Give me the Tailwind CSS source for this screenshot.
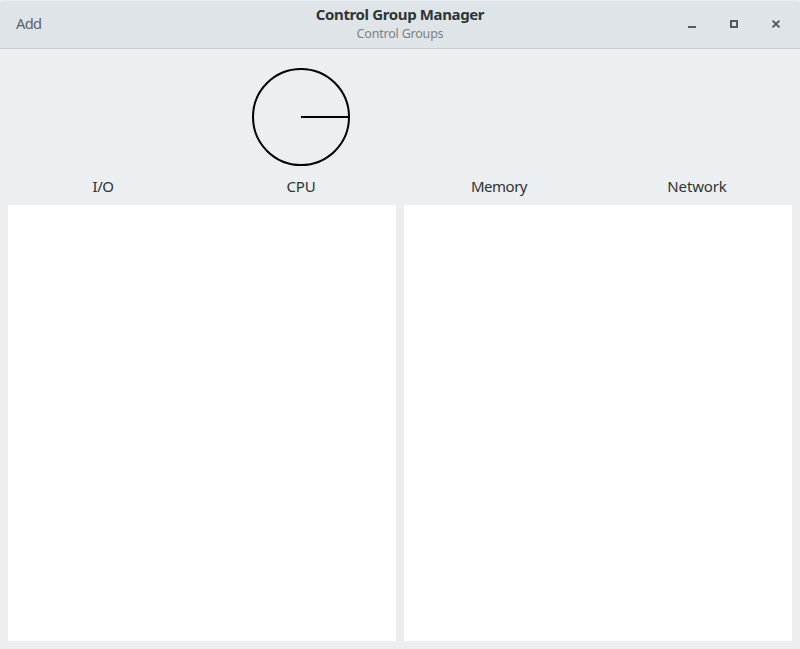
<!DOCTYPE html>
<html lang="en"><head><meta charset="utf-8"><title>Control Group Manager</title>
<script src="https://cdn.jsdelivr.net/npm/@tailwindcss/browser@4"></script></head>
<body class="w-[800px] h-[649px] overflow-hidden bg-[#ebeff2] flex flex-col font-['Noto_Sans',sans-serif] text-[#2e3436]">
<header class="h-[49px] shrink-0 grid grid-cols-3 bg-[#dfe4e8] border-b border-b-[#c5cacd] border-t border-t-[#e9edf0] rounded-t-[3px]">
<button class="justify-self-start self-center pl-4 pb-[3px] text-[14.67px] tracking-[-0.7px] leading-5 text-[#5c6165]">Add</button>
<div class="text-center pt-[3px]">
<h1 class="text-[15px] tracking-[-0.37px] leading-5 font-bold whitespace-nowrap">Control Group Manager</h1>
<p class="text-[12.5px] tracking-[-0.2px] leading-5 text-[#7c8184]">Control Groups</p>
</div>
<div class="flex justify-end items-center gap-[26px] pr-4 pb-0.5">
<svg class="size-4" viewBox="0 0 16 16"><path d="M4 10h8v2H4z" fill="#555a5d"/></svg>
<svg class="size-4" viewBox="0 0 16 16"><path d="M5 5h6v6H5z" fill="none" stroke="#555a5d" stroke-width="2"/></svg>
<svg class="size-4" viewBox="0 0 16 16"><path d="M4.600 4.600l6.800 6.800M11.400 4.600l-6.800 6.800" stroke="#555a5d" stroke-width="2"/></svg>
</div>
</header>
<main class="flex-1 flex flex-col px-2 pb-2">
<section class="h-[156px] grid grid-cols-4 gap-x-2 text-center text-[15px] tracking-[-0.15px] leading-5 items-end pb-[9px]">
<div class="tracking-[-0.5px]">I/O</div>
<div class="flex flex-col items-center"><svg class="w-[100px] h-[100px] mb-[9px]" viewBox="0 0 100 100" fill="none" stroke="#000" stroke-width="2"><circle cx="50" cy="50" r="48"/><path d="M50 50h48"/></svg>CPU</div>
<div class="tracking-[-0.5px]">Memory</div><div>Network</div>
</section>
<section class="flex-1 grid grid-cols-2 gap-2"><div class="bg-white"></div><div class="bg-white"></div></section>
</main>
</body></html>
